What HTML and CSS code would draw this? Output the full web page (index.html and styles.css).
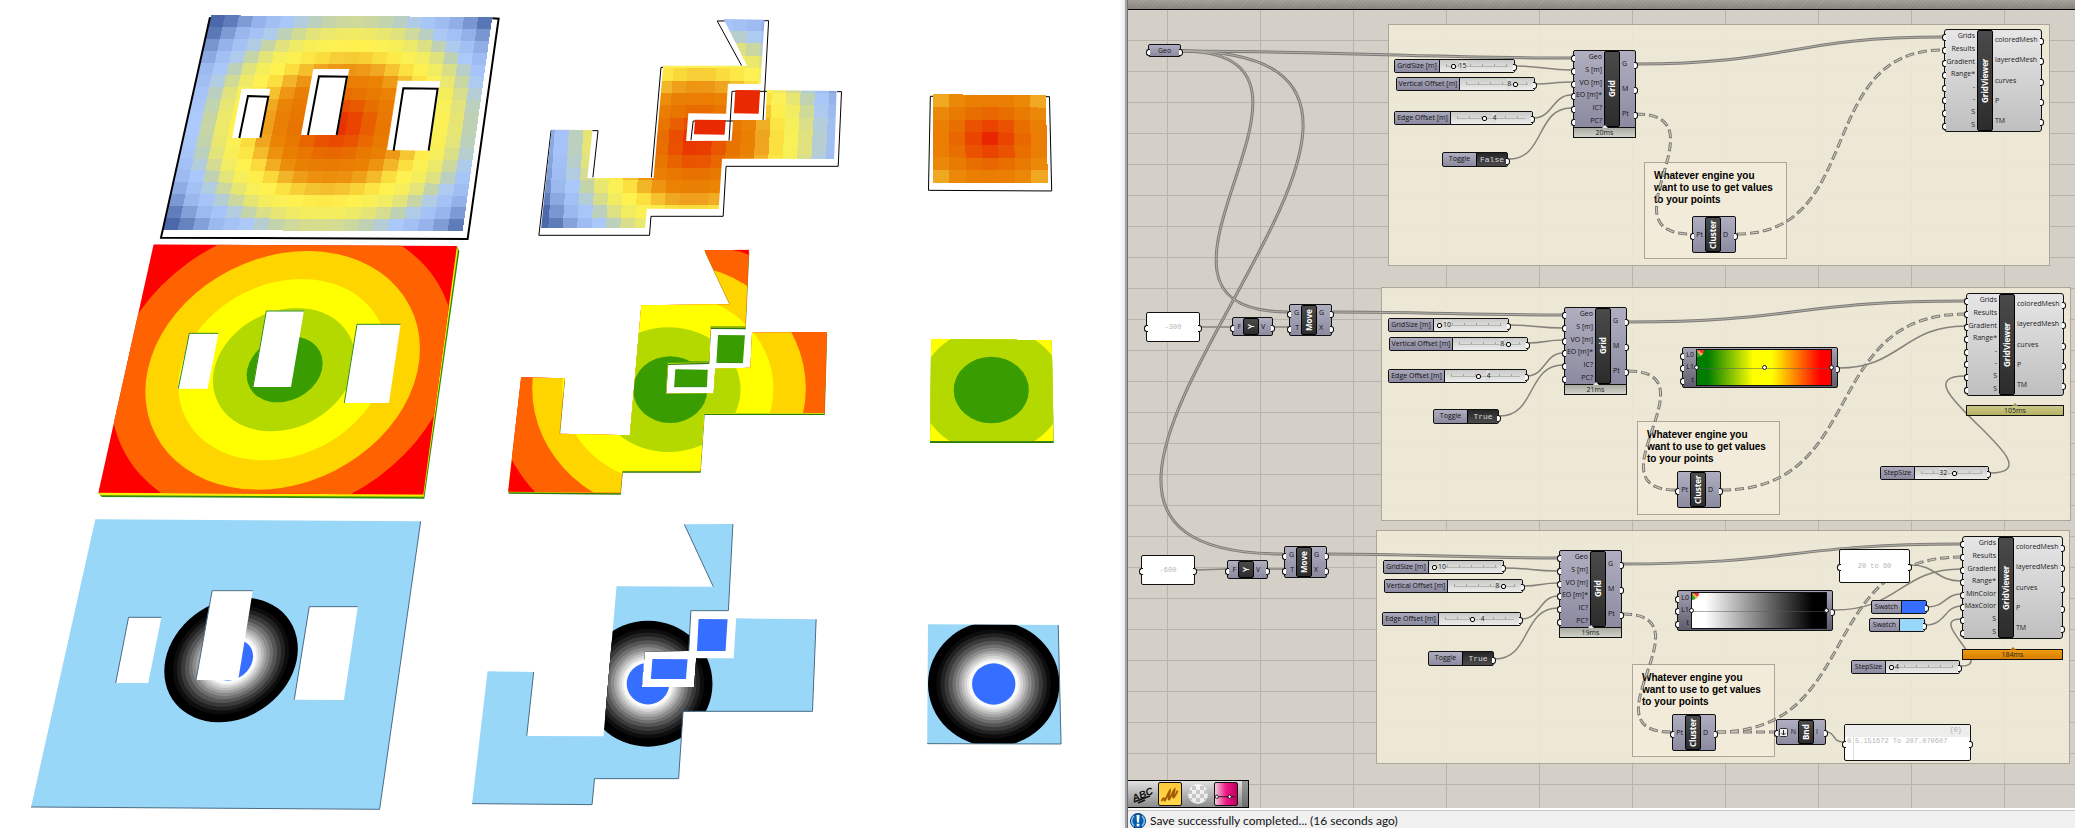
FILE: index.html
```html
<!DOCTYPE html>
<html lang="en">
<head>
<meta charset="utf-8">
<title>Grid viewer definition</title>
<link rel="stylesheet" href="styles.css">
</head>
<body>
<main class="app">
<section class="viewport" aria-label="Model view">
<svg class="scene" viewBox="0 0 1120 828" preserveAspectRatio="xMinYMin meet" role="img" aria-label="Coloured grids">
<defs>
<g id="rings">
<circle r="1" fill="#000"/><circle r=".87" fill="#0d0d0d"/><circle r=".81" fill="#222"/><circle r=".75" fill="#3a3a3a"/><circle r=".69" fill="#555"/><circle r=".63" fill="#707070"/><circle r=".58" fill="#8a8a8a"/><circle r=".53" fill="#a4a4a4"/><circle r=".49" fill="#bcbcbc"/><circle r=".45" fill="#d4d4d4"/><circle r=".41" fill="#eaeaea"/><circle r=".38" fill="#fbfbfb"/><circle r=".33" fill="#366fff"/>
</g>
<clipPath id="clipB1"><path id="b1" d="M550 57L661 59 650 252 562 251 557 341 455 340 449 423 572 422 576 360 664 360 667 270 856 273 849 477 546 476 537 627 343 626 338 684 57 684 85 389 196 390 182 534 361 534 387 197 614 197Z"/></clipPath>
<clipPath id="clipA2"><path d="M221 13L1131 18 1030 764 55 758Z"/></clipPath>
<clipPath id="clipB2"><path id="b2" d="M568 31L680 29 671 262 583 261 579 366 475 369 470 461 591 460 595 386 684 383 688 278 877 276 871 519 567 519 557 692 360 692 355 758 71 755 104 412 214 415 201 581 379 586 408 196 632 193Z"/></clipPath>
<clipPath id="clipC2"><path id="c2" d="M1141 296L1446 298 1451 604 1138 604Z"/></clipPath>
<clipPath id="clipB3"><path id="b3" d="M574 43L693 42 682 302 590 301 585 423 477 424 470 531 598 531 603 445 695 445 701 325 897 328 888 604 571 604 560 806 354 806 348 884 54 881 92 484 205 486 188 678 376 679 408 229 645 230Z"/></clipPath>
<clipPath id="clipC3"><path id="c3" d="M1171 343L1490 345 1497 702 1169 701Z"/></clipPath>
</defs>

<g transform="translate(140 0) scale(.3333)">
<g id="heatA"></g>
<g class="hole"><path d="M305 266H391L362 414H276Z"/><path d="M520 207H628L592 405H483Z"/><path d="M774 242L901 243 868 452 741 450Z"/></g>
<g class="edge edge-bold"><path d="M1057 55L1076 56 983 717 63 713 210 52"/><path d="M298 414L324 288 385 290 361 413"/><path d="M504 405L537 229 621 230 590 405"/><path d="M761 452L790 265 893 266 866 452"/></g>
</g>

<g transform="translate(520 0) scale(.37 .3333)">
<g class="edge"><path d="M599 197L533 63 672 62 657 360"/><path d="M857 275H869L860 499H557L549 649H354L350 706H51L84 392H211L197 532"/><path d="M355 532L381 202H390"/><path d="M462 421L468 363H577M565 422L573 274H668"/><path d="M1117 289H1109L1104 571 1437 573 1431 290H1420"/></g>
<g id="heatB" clip-path="url(#clipB1)"></g>
<path fill="#e92a00" d="M582 270L649 271 645 341 578 340ZM473 359L556 360 553 404 470 403Z"/>
<g id="heatC"></g>
</g>

<g transform="translate(80 240) scale(.3333)">
<path fill="#2f8a10" d="M55 758L65 771 1033 776 1138 34 1131 18Z"/>
<path fill="#f4ef00" d="M55 758L63 766 1031 770 1134 30 1131 18Z"/>
<g clip-path="url(#clipA2)">
<path fill="red" d="M0 0H1200V800H0Z"/>
<circle r="1.25" fill="#ff6200" transform="matrix(412 -65 0 352 608 391)"/>
<circle r="1" fill="#ffd500" transform="matrix(412 -65 0 352 608 391)"/>
<circle r=".76" fill="#ff0" transform="matrix(412 -65 0 352 608 389)"/>
<circle r=".517" fill="#b3d900" transform="matrix(412 -65 0 352 612 389)"/>
<circle r=".277" fill="#399c00" transform="matrix(412 -65 0 352 614 388)"/>
</g>
<g class="hole"><path d="M327 280H415L383 446H293Z"/><path d="M558 212H672L633 441H518Z"/><path d="M830 252H962L927 489H792Z"/></g>
<g class="rim"><path d="M295 446L328 280H415"/><path d="M519 441L559 213H672"/><path d="M793 489L831 253H962"/></g>
</g>

<g transform="translate(480 240) scale(.3954 .3333)">
<use href="#b2" fill="#2f7a10" transform="translate(1 6)"/>
<use href="#b2" fill="#ff0" transform="translate(0 2)"/>
<g clip-path="url(#clipB2)">
<path fill="red" d="M0 0H900V800H0Z"/>
<ellipse cx="478" cy="445" rx="445" ry="480" fill="#ff6200"/>
<path fill="red" d="M634 26L684 26V47Q664 34 634 29Z"/>
<ellipse cx="478" cy="445" rx="346" ry="375" fill="#ffd500"/>
<ellipse cx="475" cy="445" rx="267" ry="285" fill="#ff0"/>
<ellipse cx="477" cy="449" rx="182" ry="187" fill="#b3d900"/>
<ellipse cx="481" cy="449" rx="94" ry="100" fill="#399c00"/>
</g>
<path fill="#399c00" d="M602 285L670 286 665 368 598 367ZM494 388L576 389 574 440 491 440Z"/>
<path class="rim" d="M598 367L665 368M491 440H574M583 261H671M532 366H579"/>
<use href="#c2" fill="#2f7a10" transform="translate(0 5)"/>
<g clip-path="url(#clipC2)">
<path fill="#ff0" d="M1100 250H1500V650H1100Z"/>
<ellipse cx="1295" cy="451" rx="182" ry="188" fill="#b3d900"/>
<ellipse cx="1293" cy="450" rx="95" ry="100" fill="#399c00"/>
</g>
</g>

<g transform="translate(0 510) scale(.3571 .3333)">
<path fill="#99d7f9" d="M267 28L1178 34 1063 898 87 891Z"/>
<use href="#rings" transform="matrix(187 -34 0 184 647 450)"/>
<g class="hole"><path d="M360 322H452L415 519H324Z"/><path d="M594 241H708L667 510H549Z"/><path d="M866 290H1002L963 570 824 569Z"/></g>
<g class="shade"><path d="M1178 34L1063 898 87 891"/><path d="M324 519L360 322H452"/><path d="M549 510L594 242H708"/><path d="M824 569L866 290H1002"/></g>
</g>

<g transform="translate(450 510) scale(.4082 .3333)">
<use href="#b3" fill="#99d7f9"/>
<g clip-path="url(#clipB3)"><use href="#rings" transform="matrix(158 0 0 189 485 521)"/></g>
<path fill="#366fff" d="M609 327L680 328 675 423 605 423ZM496 447L582 448 578 507 492 507Z"/>
<use href="#c3" fill="#99d7f9"/>
<g clip-path="url(#clipC3)"><use href="#rings" transform="matrix(161 0 0 188 1332 522)"/></g>
<g class="shade"><path d="M54 881L348 884 354 806H560L571 604H888L897 328"/><path d="M205 486L188 678M574 43L645 230M693 42L682 302H590L585 423"/><path d="M1169 701L1497 702 1490 345"/></g>
</g>
</svg>
</section>

<section class="editor" aria-label="Node editor">
<div class="ruler"></div>
<div class="canvas">

<div class="group g1"></div><div class="group g2"></div><div class="group g3"></div>
<div class="group note n1"><p>Whatever engine you<br>want to use to get values<br>to your points</p></div>
<div class="group note n2"><p>Whatever engine you<br>want to use to get values<br>to your points</p></div>
<div class="group note n3"><p>Whatever engine you<br>want to use to get values<br>to your points</p></div>

<svg class="wires" aria-hidden="true">
<defs>
<g id="lists">
<path d="M1181 51C1310 51 1440 58 1571 58"/>
<path d="M1181 51C1374 51 1095 312 1288 312"/>
<path d="M1181 51C1558 51 906 554 1283 554"/>
<path d="M1333 312C1410 312 1486 315 1563 315"/>
<path d="M1328 554C1405 554 1481 558 1558 558"/>
<path d="M1636 64C1790 64 1790 37 1943 37"/>
<path d="M1628 322C1796 322 1796 301 1965 301"/>
<path d="M1623 564C1792 564 1792 544 1961 544"/>
</g>
<g id="trees">
<path d="M1636 114C1726 114 1601 234 1691 234"/>
<path d="M1737 234C1866 234 1814 50 1943 50"/>
<path d="M1628 371C1716 371 1588 490 1676 490"/>
<path d="M1722 490C1868 490 1819 314 1965 314"/>
<path d="M1623 614C1711 614 1583 732 1671 732"/>
<path d="M1717 732C1863 732 1815 557 1961 557"/>
<path d="M1717 732H1775"/>
</g>
</defs>
<g transform="translate(-1128 -10)">
<g class="wire">
<path d="M1516 66C1540 66 1548 70 1571 70"/><path d="M1535 84C1550 84 1557 82 1571 82"/><path d="M1534 118C1552 118 1553 95 1571 95"/><path d="M1509 159C1545 159 1536 108 1571 108"/>
<path d="M1200 327H1231M1274 327H1288"/>
<path d="M1509 325C1535 325 1537 328 1563 328"/><path d="M1528 343C1545 343 1546 340 1563 340"/><path d="M1527 376C1545 376 1545 353 1563 353"/><path d="M1500 416C1536 416 1527 365 1563 365"/>
<path d="M1195 570L1226 569M1268 569H1283"/>
<path d="M1504 568C1530 568 1532 571 1558 571"/><path d="M1524 586C1541 586 1541 583 1558 583"/><path d="M1522 619C1540 619 1540 596 1558 596"/><path d="M1495 659C1531 659 1522 608 1558 608"/>
<path d="M1839 368C1900 368 1904 326 1965 326"/>
<path d="M1990 473C2065 473 1890 376 1965 376"/>
<path d="M1834 610C1900 610 1900 569 1961 569"/>
<path d="M1911 565C1936 565 1936 581 1961 581"/>
<path d="M1928 607C1945 607 1945 594 1961 594"/><path d="M1926 625C1945 625 1945 606 1961 606"/>
<path d="M1961 666C1996 666 1926 619 1961 619"/>
<path d="M1826 732C1836 732 1832 742 1843 742"/>
</g>
<use href="#lists" class="list-outer"/><use href="#lists" class="list-inner"/>
<use href="#trees" class="tree-outer"/><use href="#trees" class="tree-inner"/>
</g>
</svg>

<div class="node param geo">Geo</div>

<div class="slider gs1"><label for="gs1">GridSize [m]</label><span class="track right"><input id="gs1" type="range" min="10" max="50" value="15" step="1"><output for="gs1" style="--at:13%">15</output></span></div>
<div class="slider wide vo1"><label for="vo1">Vertical Offset [m]</label><span class="track left"><input id="vo1" type="range" min="0" max="10" value="8"><output for="vo1" style="--at:80%">8</output></span></div>
<div class="slider edge-slider eo1"><label for="eo1">Edge Offset [m]</label><span class="track right"><input id="eo1" type="range" min="0" max="10" value="4"><output for="eo1" style="--at:40%">4</output></span></div>
<div class="toggle t1"><span id="tl1">Toggle</span><button type="button" aria-labelledby="tl1">False</button></div>
<div class="node grid a1"><ul class="in"><li>Geo</li><li>S [m]</li><li>VO [m]</li><li>EO [m]*</li><li>IC?</li><li>PC?</li></ul><strong>Grid</strong><ul class="out"><li>G</li><li>M</li><li>Pt</li></ul></div>
<div class="timing short ta1">20ms</div>
<div class="node cluster c1"><ul class="in"><li>Pt</li></ul><strong>Cluster</strong><ul class="out"><li>D</li></ul></div>
<div class="node viewer v1"><ul class="in"><li>Grids</li><li>Results</li><li>Gradient</li><li>Range*</li><li>-</li><li>-</li><li>S</li><li>S</li></ul><strong>GridViewer</strong><ul class="out"><li>coloredMesh</li><li>layeredMesh</li><li>curves</li><li>P</li><li>TM</li></ul></div>

<div class="panel p2"><span>-300</span></div>
<div class="node unit y2"><ul class="in"><li>F</li></ul><strong>Y</strong><ul class="out"><li>V</li></ul></div>
<div class="node move m2"><ul class="in"><li>G</li><li>T</li></ul><strong>Move</strong><ul class="out"><li>G</li><li>X</li></ul></div>
<div class="slider gs2"><label for="gs2">GridSize [m]</label><span class="track right"><input id="gs2" type="range" min="10" max="50" value="10"><output for="gs2" style="--at:0%">10</output></span></div>
<div class="slider wide vo2"><label for="vo2">Vertical Offset [m]</label><span class="track left"><input id="vo2" type="range" min="0" max="10" value="8"><output for="vo2" style="--at:80%">8</output></span></div>
<div class="slider edge-slider eo2"><label for="eo2">Edge Offset [m]</label><span class="track right"><input id="eo2" type="range" min="0" max="10" value="4"><output for="eo2" style="--at:40%">4</output></span></div>
<div class="toggle t2"><span id="tl2">Toggle</span><button type="button" aria-labelledby="tl2">True</button></div>
<div class="node grid a2"><ul class="in"><li>Geo</li><li>S [m]</li><li>VO [m]</li><li>EO [m]*</li><li>IC?</li><li>PC?</li></ul><strong>Grid</strong><ul class="out"><li>G</li><li>M</li><li>Pt</li></ul></div>
<div class="timing short ta2">21ms</div>
<div class="node gradient r2"><ul class="in"><li>L0</li><li>L1</li><li>t</li></ul><span class="ramp traffic"><i></i><i></i><i></i></span></div>
<div class="node cluster c2"><ul class="in"><li>Pt</li></ul><strong>Cluster</strong><ul class="out"><li>D</li></ul></div>
<div class="node viewer v2"><ul class="in"><li>Grids</li><li>Results</li><li>Gradient</li><li>Range*</li><li>-</li><li>-</li><li>S</li><li>S</li></ul><strong>GridViewer</strong><ul class="out"><li>coloredMesh</li><li>layeredMesh</li><li>curves</li><li>P</li><li>TM</li></ul></div>
<div class="timing olive tv2">105ms</div>
<div class="slider step ss2"><label for="ss2">StepSize</label><span class="track left"><input id="ss2" type="range" min="4" max="55" value="32"><output for="ss2" style="--at:55%">32</output></span></div>

<div class="panel p3"><span>-600</span></div>
<div class="node unit y3"><ul class="in"><li>F</li></ul><strong>Y</strong><ul class="out"><li>V</li></ul></div>
<div class="node move m3"><ul class="in"><li>G</li><li>T</li></ul><strong>Move</strong><ul class="out"><li>G</li><li>X</li></ul></div>
<div class="slider gs3"><label for="gs3">GridSize [m]</label><span class="track right"><input id="gs3" type="range" min="10" max="50" value="10"><output for="gs3" style="--at:0%">10</output></span></div>
<div class="slider wide vo3"><label for="vo3">Vertical Offset [m]</label><span class="track left"><input id="vo3" type="range" min="0" max="10" value="8"><output for="vo3" style="--at:80%">8</output></span></div>
<div class="slider edge-slider eo3"><label for="eo3">Edge Offset [m]</label><span class="track right"><input id="eo3" type="range" min="0" max="10" value="4"><output for="eo3" style="--at:40%">4</output></span></div>
<div class="toggle t3"><span id="tl3">Toggle</span><button type="button" aria-labelledby="tl3">True</button></div>
<div class="node grid a3"><ul class="in"><li>Geo</li><li>S [m]</li><li>VO [m]</li><li>EO [m]*</li><li>IC?</li><li>PC?</li></ul><strong>Grid</strong><ul class="out"><li>G</li><li>M</li><li>Pt</li></ul></div>
<div class="timing short ta3">19ms</div>
<div class="node gradient r3"><ul class="in"><li>L0</li><li>L1</li><li>t</li></ul><span class="ramp mono"><i></i><i></i></span></div>
<div class="node cluster c3"><ul class="in"><li>Pt</li></ul><strong>Cluster</strong><ul class="out"><li>D</li></ul></div>
<div class="node bounds b3"><ul class="in"><li><svg viewBox="0 0 9 9" width="9" height="9" aria-hidden="true"><rect x=".5" y=".5" width="8" height="8" rx="1" fill="#eee" stroke="#333"/><path d="M4.500 2V7M2.500 5L4.500 7 6.500 5" fill="none" stroke="#222"/></svg>N</li></ul><strong>Bnd</strong><ul class="out"><li>I</li></ul></div>
<div class="panel range-panel"><span>20 to 60</span></div>
<div class="swatch s1"><span>Swatch</span><button type="button" class="blue" aria-label="Minimum colour"></button></div>
<div class="swatch s2"><span>Swatch</span><button type="button" class="sky" aria-label="Maximum colour"></button></div>
<div class="node viewer v3"><ul class="in"><li>Grids</li><li>Results</li><li>Gradient</li><li>Range*</li><li>MinColor</li><li>MaxColor</li><li>S</li><li>S</li></ul><strong>GridViewer</strong><ul class="out"><li>coloredMesh</li><li>layeredMesh</li><li>curves</li><li>P</li><li>TM</li></ul></div>
<div class="timing orange tv3">184ms</div>
<div class="slider step ss3"><label for="ss3">StepSize</label><span class="track right"><input id="ss3" type="range" min="4" max="55" value="4"><output for="ss3" style="--at:0%">4</output></span></div>
<div class="panel data-panel"><header>{0}</header><div class="row"><span>0</span><span>5.151672 To 207.070607</span></div></div>

<nav class="tools" aria-label="Canvas tools">
<button type="button" aria-label="Draw names"><svg viewBox="0 0 24 24"><text x="2" y="17" transform="rotate(-22 10 14)" class="abc">ABC</text><path d="M4 20L20 14M8 21L15 18" stroke="#111" stroke-width="1.500" fill="none"/></svg></button>
<button type="button" class="on" aria-label="Sketch"><svg viewBox="0 0 24 24"><path d="M3 19C5 15 6 16 6 20 8 16 11 9 12 8 12 12 9 18 11 18 13 16 15 9 17 7 17 11 14 16 16 16 18 14 19 11 20 9" stroke="#a35a00" stroke-width="2" fill="none" stroke-linecap="round"/></svg></button>
<button type="button" aria-label="Transparency"><svg viewBox="0 0 24 24"><circle cx="12" cy="12" r="10" fill="#fff" opacity=".8"/><path fill="#aaa" opacity=".6" d="M6 4h4v4h-4zM14 4h4v4h-4zM10 8h4v4h-4zM18 8h4v4h-4zM2 8h4v4h-4zM6 12h4v4h-4zM14 12h4v4h-4zM10 16h4v4h-4zM18 16h2v2h-2zM4 16h2v2h-2z"/></svg></button>
<button type="button" class="pink" aria-label="Gradient"><svg viewBox="0 0 24 24"><path d="M2 15H22" stroke="#111"/><circle cx="2" cy="15" r="1.800" fill="#fff" stroke="#111"/><circle cx="16" cy="15" r="1.800" fill="#fff" stroke="#111"/></svg></button>
<span class="tools-end"></span>
</nav>
</div>
<footer class="status"><svg viewBox="0 0 16 16" width="16" height="16" aria-hidden="true"><circle cx="8" cy="8" r="7.500" fill="#0b5cab" stroke="#123a70"/><path d="M4 3A6.500 6.500 0 0 0 4 13M12 3A6.500 6.500 0 0 1 12 13" stroke="#7cc6f5" fill="none" stroke-width="1.500"/><path d="M6.500 2H9.500L9 9.500H7Z" fill="#fff"/><circle cx="8" cy="12" r="1.500" fill="#fff"/></svg><span>Save successfully completed... (16 seconds ago)</span></footer>
</section>
</main>
<script src="heat.js"></script>
</body>
</html>
```

FILE: styles.css
```css
* { box-sizing: border-box; }
body { margin: 0; background: #fff; font-family: "Open Sans", "Noto Sans", sans-serif; }
ul, p { margin: 0; padding: 0; list-style: none; }
button { font: inherit; margin: 0; padding: 0; border: 0; cursor: pointer; }

.app { display: grid; grid-template-columns: 1120fr 955fr; height: 100vh; overflow: hidden; }
.viewport { min-width: 0; overflow: hidden; background: #fff; }
.scene { display: block; width: 100%; }
.scene path, .scene use { vector-effect: non-scaling-stroke; }
#heatA, #heatB, #heatC { shape-rendering: crispEdges; }
.hole { fill: #fff; }
.edge { fill: none; stroke: #000; stroke-width: 1; }
.edge-bold { stroke-width: 2; }
.rim { fill: none; stroke: #2f8a10; stroke-width: 1; }
.shade { fill: none; stroke: #4a6c85; stroke-width: 1; }

.editor {
  display: flex; flex-direction: column; min-width: 0; overflow: hidden; padding-left: 8px;
  background: linear-gradient(90deg, #fcfcfc 0, #ececee 5px, #a4a6aa 5px, #a4a6aa 7px, #6e7074 7px);
}
.ruler {
  flex: none; height: 10px; border-bottom: 1px solid #000;
  background: repeating-linear-gradient(135deg, rgba(255,255,255,.07) 0 1px, transparent 1px 3px), linear-gradient(#a19f96, #84827a);
}
.canvas {
  position: relative; flex: 1; overflow: hidden; min-height: 0;
  background:
    linear-gradient(90deg, #b8b4ab 1px, transparent 1px) 39px 0 / 93px 100%,
    linear-gradient(#b8b4ab 1px, transparent 1px) 0 30px / 100% 31px,
    #d4d0c8;
}
.status {
  flex: none; display: flex; align-items: center; gap: 4px; height: 20px;
  padding: 3px 2px 0; border-top: 2px solid #fff; background: #f0f0f0; box-shadow: inset 0 1px #c8c8c8;
  font-family: "Lato", sans-serif; font-size: 12px; line-height: 15px; color: #111; white-space: nowrap;
}

.group { position: absolute; background: rgba(239,232,214,.92); border: 1px solid #aca698; }
.note { width: 143px; background: #f3ebd9; padding: 7px 0 0 9px; }
.note p { font: bold 10px/12px "Liberation Sans", Arial, sans-serif; color: #000; white-space: nowrap; }
.g1 { left: 260px; top: 14px; width: 662px; height: 242px; }
.g2 { left: 253px; top: 277px; width: 690px; height: 234px; }
.g3 { left: 248px; top: 520px; width: 694px; height: 234px; }
.n1 { left: 516px; top: 152px; height: 97px; }
.n2 { left: 509px; top: 411px; height: 94px; }
.n3 { left: 504px; top: 654px; height: 93px; }

.wires { position: absolute; inset: 0; width: 100%; height: 100%; fill: none; }
.wire { stroke: #85827c; stroke-width: 1.5; }
.list-outer, .tree-outer { stroke: #7d7b77; stroke-width: 3; }
.list-inner { stroke: #b4b1aa; stroke-width: 1; }
.tree-outer { stroke-dasharray: 9 4; }
.tree-inner { stroke: #d8d2c2; stroke-width: 1; stroke-dasharray: 7 6; stroke-dashoffset: -1; }

.node, .slider, .toggle, .swatch, .panel {
  position: absolute; display: flex; font-size: 7px; line-height: 10px; color: #111; white-space: nowrap;
  border: 1px solid #111; border-radius: 2px;
}
.node { background: linear-gradient(#b0aec0, #8c8aa0); }
.node ul { display: flex; flex-direction: column; padding: 0 2px; }
.node li { flex: 1; display: flex; align-items: center; position: relative; }
.in li { justify-content: flex-end; }
.node .in { padding-left: 0; flex: 1; }
.node .out { padding-right: 0; }
.node strong {
  width: 16px; flex: none; display: flex; align-items: center; justify-content: center;
  writing-mode: vertical-rl; transform: rotate(180deg);
  border-radius: 2px; border: 1px solid #000; background: linear-gradient(#2c2c2c, #4a4a4a);
  color: #fff; font-size: 8px; line-height: 12px;
}
.in li::before, .out li::after, .slider::after, .toggle::after, .swatch::after, .panel::before, .panel::after, .param::before, .param::after, .gradient::after {
  content: ""; position: absolute; top: 50%; width: 3px; height: 5px; margin-top: -2px; background: #fff; border: 1px solid #111;
}
.in li::before, .panel::before, .param::before { left: -3px; border-right: 0; border-radius: 3px 0 0 3px; }
.out li::after, .slider::after, .toggle::after, .swatch::after, .panel::after, .param::after, .gradient::after { right: -3px; border-left: 0; border-radius: 0 3px 3px 0; }

.param { justify-content: center; align-items: center; width: 33px; height: 13px; }
.geo { left: 20px; top: 34px; }

.grid { width: 63px; height: 78px; border-radius: 2px 2px 0 0; }
.grid .out { width: 15px; }
.a1 { left: 445px; top: 40px; }
.a2 { left: 436px; top: 297px; }
.a3 { left: 431px; top: 540px; }
.timing { position: absolute; height: 11px; border: 1px solid #111; text-align: center; font-size: 7px; line-height: 9px; color: #222; background: linear-gradient(#a9aaa0, #d2d3ca); }
.timing::before { content: ""; position: absolute; left: 50%; top: -3px; margin-left: -3px; border: 3px solid transparent; border-top: 0; border-bottom-color: inherit; }
.short { width: 63px; }
.short::before { border-bottom-color: #e8e8e4; }
.ta1 { left: 445px; top: 117px; }
.ta2 { left: 436px; top: 374px; }
.ta3 { left: 431px; top: 617px; }
.olive { background: linear-gradient(#ccc88a, #b5b162); }
.olive::before { border-bottom-color: #9a964f; }
.orange { background: linear-gradient(#f09a10, #d98000); }
.orange::before { border-bottom-color: #b86c00; }
.tv2 { left: 838px; top: 395px; width: 98px; }
.tv3 { left: 834px; top: 639px; width: 101px; }

.viewer { width: 98px; height: 103px; background: linear-gradient(#e6e6e6, #bfbfbf); border-radius: 3px; }
.viewer .out { width: 48px; }
.viewer li { color: #222; }
.v1 { left: 816px; top: 19px; }
.v2 { left: 838px; top: 283px; }
.v3 { left: 834px; top: 526px; width: 101px; }

.cluster { width: 44px; height: 37px; }
.cluster .out { width: 14px; }
.c1 { left: 564px; top: 206px; }
.c2 { left: 549px; top: 461px; }
.c3 { left: 544px; top: 704px; }
.unit { width: 41px; height: 19px; }
.unit .out { width: 13px; }
.y2 { left: 104px; top: 307px; }
.y3 { left: 99px; top: 550px; }
.move { width: 43px; height: 32px; }
.move .out { width: 14px; }
.m2 { left: 161px; top: 294px; }
.m3 { left: 156px; top: 536px; }
.bounds { width: 50px; height: 26px; }
.bounds .out { width: 11px; }
.bounds .in li { gap: 3px; }
.b3 { left: 648px; top: 709px; }

.slider { width: 121px; height: 14px; background: #a09eb0; }
.slider label { width: 45px; flex: none; text-align: center; line-height: 12px; border-right: 1px solid #111; background: linear-gradient(#aaa8ba, #8c8aa0); }
.track { position: relative; flex: 1; background: linear-gradient(#c9cac8, #ececea); }
.track::before { content: ""; position: absolute; inset: 4px 6px 5px; border-bottom: 1px solid #b3b3b0; background: repeating-linear-gradient(90deg, #a2a2a0 0 1px, transparent 1px 12px); }
.track input { position: absolute; inset: 0 3px; width: calc(100% - 6px); height: 100%; margin: 0; appearance: none; background: none; }
.track input::-webkit-slider-thumb { appearance: none; width: 5px; height: 5px; background: #fff; border: 1px solid #000; border-radius: 2px; }
.track output { position: absolute; top: 1px; line-height: 10px; background: #dcdcda; }
.track.right output { left: var(--at); margin-left: 9px; }
.track.left output { right: calc(100% - var(--at) + 8px); }
.wide { width: 139px; }
.wide label { width: 63px; }
.edge-slider { width: 139px; }
.edge-slider label { width: 56px; }
.step { width: 109px; }
.step label { width: 34px; }
.gs1 { left: 266px; top: 49px; } .vo1 { left: 268px; top: 67px; } .eo1 { left: 266px; top: 101px; }
.gs2 { left: 260px; top: 308px; } .vo2 { left: 261px; top: 327px; } .eo2 { left: 260px; top: 359px; }
.gs3 { left: 255px; top: 550px; } .vo3 { left: 256px; top: 569px; } .eo3 { left: 254px; top: 602px; }
.ss2 { left: 752px; top: 456px; } .ss3 { left: 723px; top: 650px; }

.toggle { width: 66px; height: 15px; background: linear-gradient(#b0aec0, #8c8aa0); }
.toggle span { flex: 1; text-align: center; line-height: 12px; }
.toggle button { width: 31px; background: linear-gradient(#262626, #4c4c4c); color: #d8d8d8; font: 8px/12px "Liberation Mono", monospace; border-left: 1px solid #000; }
.t1 { left: 314px; top: 142px; } .t2 { left: 305px; top: 399px; } .t3 { left: 300px; top: 641px; }

.swatch { width: 56px; height: 14px; background: linear-gradient(#b0aec0, #8c8aa0); }
.swatch span { flex: 1; text-align: center; line-height: 11px; }
.swatch button { width: 25px; border-left: 1px solid #111; }
.blue { background: #366fff; } .sky { background: #99d7f9; }
.s1 { left: 743px; top: 590px; } .s2 { left: 741px; top: 608px; }

.gradient { width: 156px; height: 41px; padding: 1px 5px 1px 0; background: linear-gradient(#a5a3b4, #5e5c6a); }
.gradient .in { flex: 1; }
.ramp { position: relative; width: 136px; border: 1px solid #111; display: flex; align-items: center; justify-content: space-between; }
.ramp::before { content: ""; position: absolute; left: 0; right: 0; top: 50%; height: 1px; background: rgba(90,90,90,.5); }
.ramp::after { content: ""; position: absolute; left: 0; top: 0; width: 7px; height: 7px; border-radius: 0 0 7px 0; background: conic-gradient(from 90deg at 0 0, #e33 0 30deg, #f3b04a 30deg 60deg, #3a3 60deg 90deg); }
.ramp i { position: relative; z-index: 1; width: 5px; height: 5px; border-radius: 50%; background: #fff; border: 1px solid #111; margin: 0 -3px; }
.traffic { background: linear-gradient(90deg, #007d00 8%, #ff0 42%, #ff0 56%, red 92%); }
.mono { background: linear-gradient(90deg, #fff 10%, #000 90%); }
.r2 { left: 554px; top: 337px; } .r3 { left: 549px; top: 580px; }

.panel { width: 54px; height: 30px; align-items: center; justify-content: center; background: #fff; color: #b4b4b4; font-family: "Liberation Mono", monospace; }
.p2 { left: 18px; top: 302px; } .p3 { left: 13px; top: 545px; }
.range-panel { left: 711px; top: 539px; width: 71px; height: 34px; }
.data-panel { left: 716px; top: 714px; width: 127px; height: 37px; flex-direction: column; align-items: stretch; justify-content: flex-start; }
.data-panel header { background: #ededeb; text-align: right; padding-right: 8px; height: 12px; }
.row { flex: 1; display: flex; line-height: 9px; }
.row span:first-child { width: 9px; padding-left: 2px; border-right: 1px solid #ddd; }
.row span:last-child { padding-left: 1px; }

.tools { position: absolute; left: 0; bottom: 0; display: flex; align-items: center; gap: 4px; height: 28px; padding-left: 2px; border: solid #000; border-width: 1px 1px 1px 0; background: linear-gradient(#e0e0e0, #8c8c8c); }
.tools button { width: 24px; height: 24px; background: none; }
.tools svg { display: block; width: 100%; height: 100%; }
.tools .on { border: 1px solid #111; border-radius: 2px; background: linear-gradient(#ffc93a, #ffd94a); }
.tools .pink { border: 1px solid #111; border-radius: 2px; background: linear-gradient(90deg, #eecbdc, #ee1a86 50%, #c00060); }
.tools-end { align-self: stretch; width: 6px; background: linear-gradient(#999, #6e6e6e); }
.abc { font: italic bold 10px "Liberation Sans", sans-serif; fill: #111; }
```

FILE: heat.js
```js
const STOPS = [
  [0, 232, 38, 0], [1.5, 234, 74, 0], [3, 232, 116, 0], [4.4, 235, 132, 4], [5.3, 240, 168, 34],
  [6.2, 250, 220, 60], [7, 255, 242, 80], [7.8, 245, 238, 92], [8.6, 224, 226, 126],
  [9.4, 190, 209, 180], [10.2, 171, 201, 250], [11.3, 156, 185, 240], [12.3, 122, 150, 208], [13.3, 74, 104, 170]
];

function heat(d) {
  if (d >= 13.3) return "rgb(74,104,170)";
  const i = STOPS.findIndex((s, k) => d < STOPS[k + 1][0]);
  const a = STOPS[i], b = STOPS[i + 1], t = (d - a[0]) / (b[0] - a[0]);
  return "rgb(" + [1, 2, 3].map(k => Math.round(a[k] + (b[k] - a[k]) * t)).join() + ")";
}

// Fills a quad (tl, tr, br, bl) with cols x rows cells coloured by distance from (cu, cv), in cells.
function mesh(id, q, cols, rows, cu, cv, kx, ky) {
  const at = (u, v) => [0, 1].map(k =>
    ((q[0][k] * (1 - u) + q[1][k] * u) * (1 - v) + (q[3][k] * (1 - u) + q[2][k] * u) * v).toFixed(1)).join(" ");
  let out = "";
  for (let r = 0; r < rows; r++) {
    for (let c = 0; c < cols; c++) {
      const fill = heat(Math.hypot((c + 0.5 - cu) * kx, (r + 0.5 - cv) * ky));
      const p = [at(c / cols, r / rows), at((c + 1) / cols, r / rows), at((c + 1) / cols, (r + 1) / rows), at(c / cols, (r + 1) / rows)];
      out += `<path d="M${p.join("L")}Z" fill="${fill}"/>`;
    }
  }
  document.getElementById(id).innerHTML = out;
}

mesh("heatA", [[213, 46], [1057, 51], [968, 694], [68, 690]], 20, 18, 10.4, 9.1, 1.03, 1.05);
mesh("heatB", [[75, 55], [885, 55], [855, 690], [37, 690]], 21, 17, 10.9, 9.9, 1.13, 1.1);
mesh("heatC", [[1117, 283], [1421, 285], [1427, 549], [1115, 548]], 7, 7, 3.5, 3.5, 1.25, 1.25);
```
